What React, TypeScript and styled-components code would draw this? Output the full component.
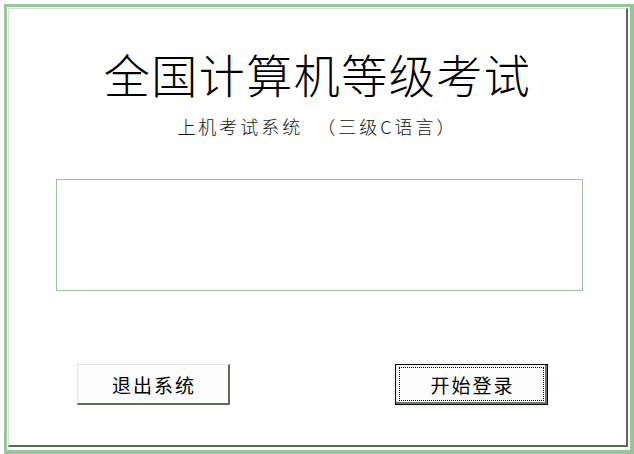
import styled, { createGlobalStyle } from "styled-components";

const GlobalStyle = createGlobalStyle`
  html, body {
    margin: 0;
    padding: 0;
    background: #ffffff;
  }
  body {
    font-family: "Noto Sans CJK SC", "Liberation Sans", sans-serif;
  }
`;

const Screen = styled.div`
  width: 634px;
  height: 454px;
  padding: 4px 0 0 4px;
  box-sizing: border-box;
  background: #ffffff;
`;

const Frame = styled.div`
  height: 100%;
  box-sizing: border-box;
  border-style: solid;
  border-color: #96c896;
  border-width: 3px 4px 4px 3px;
  padding: 1px 2px 3px 1px;
  background: #ffffff;
`;

const Panel = styled.div`
  height: 100%;
  box-sizing: border-box;
  border-top: 1px solid #dcdcdc;
  border-left: 1px solid #dcdcdc;
  border-right: 2px solid #5a6a5a;
  border-bottom: 2px solid #5a6a5a;
  display: flex;
  flex-direction: column;
  align-items: center;
  padding-top: 41px;
  background: #ffffff;
`;

const Title = styled.h1`
  margin: 0;
  font-size: 46px;
  line-height: 46px;
  font-weight: 300;
  letter-spacing: 1.5px;
  color: #000000;
`;

const Subtitle = styled.div`
  margin-top: 21px;
  font-size: 18px;
  line-height: 18px;
  font-weight: 300;
  letter-spacing: 3px;
  color: #111111;
  white-space: pre;
`;

const InfoBox = styled.div`
  align-self: flex-start;
  margin: 44px 0 0 47px;
  width: 527px;
  height: 112px;
  box-sizing: border-box;
  border: 1px solid #9cc49c;
`;

const ButtonRow = styled.div`
  width: 100%;
  box-sizing: border-box;
  margin-top: 73px;
  padding: 0 78px 0 68px;
  display: flex;
  justify-content: space-between;
`;

const Button = styled.button<{ $focused?: boolean }>`
  position: relative;
  width: 153px;
  height: 41px;
  box-sizing: border-box;
  padding: 0 0 0 2px;
  background: #fdfdfd;
  font-family: "Noto Sans CJK SC", "Liberation Sans", sans-serif;
  font-size: 19px;
  letter-spacing: 2px;
  color: #000000;
  cursor: pointer;
  border-style: solid;
  border-width: ${(p) => (p.$focused ? "1px" : "1px 2px 2px 1px")};
  border-color: ${(p) =>
    p.$focused ? "#000000" : "#e4e4e4 #5e6e5e #5e6e5e #e4e4e4"};
  box-shadow: ${(p) =>
    p.$focused ? "inset -2px -2px 0 #6a786a, inset 1px 1px 0 #f0f0f0" : "none"};

  &::after {
    content: "";
    display: ${(p) => (p.$focused ? "block" : "none")};
    position: absolute;
    left: 3px;
    top: 2px;
    right: 3px;
    bottom: 3px;
    border: 1px dotted #000000;
  }
`;

export default function App() {
  return (
    <>
      <GlobalStyle />
      <Screen>
        <Frame>
          <Panel>
            <Title>全国计算机等级考试</Title>
            <Subtitle>{"上机考试系统  （三级C语言）"}</Subtitle>
            <InfoBox />
            <ButtonRow>
              <Button>退出系统</Button>
              <Button $focused>开始登录</Button>
            </ButtonRow>
          </Panel>
        </Frame>
      </Screen>
    </>
  );
}
